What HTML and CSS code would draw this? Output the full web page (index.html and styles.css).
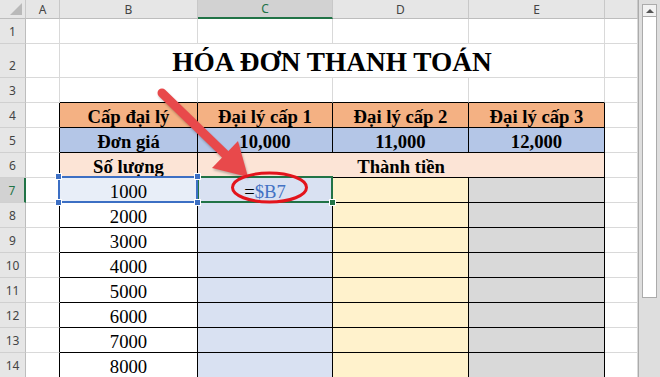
FILE: index.html
```html
<!DOCTYPE html>
<html lang="vi">
<head>
    <meta charset="UTF-8">
    <title>Hóa đơn thanh toán</title>
    <link rel="stylesheet" href="styles.css">
</head>
<body>

<div class="window">
    <div class="sheet">
        <table class="grid">
            <tr class="heads">
                <th class="corner"><span class="tri"></span></th>
                <th class="w-a">A</th>
                <th class="w-b">B</th>
                <th class="w-c active">C</th>
                <th class="w-d">D</th>
                <th class="w-e">E</th>
                <th class="w-f"></th>
            </tr>
            <tr>
                <th class="rh">1</th>
                <td></td><td></td><td></td><td></td><td></td><td></td>
            </tr>
            <tr class="tall">
                <th class="rh">2</th>
                <td></td>
                <td colspan="4" class="title">HÓA ĐƠN THANH TOÁN</td>
                <td></td>
            </tr>
            <tr class="pre">
                <th class="rh">3</th>
                <td></td><td class="edge"></td><td class="edge"></td><td class="edge"></td><td class="edge"></td><td></td>
            </tr>
            <tr class="trow head-row">
                <th class="rh">4</th>
                <td></td>
                <td class="bold">Cấp đại lý</td>
                <td class="bold">Đại lý cấp 1</td>
                <td class="bold">Đại lý cấp 2</td>
                <td class="bold">Đại lý cấp 3</td>
                <td></td>
            </tr>
            <tr class="trow price-row">
                <th class="rh">5</th>
                <td></td>
                <td class="bold">Đơn giá</td>
                <td class="bold">10,000</td>
                <td class="bold">11,000</td>
                <td class="bold">12,000</td>
                <td></td>
            </tr>
            <tr class="trow qty-row">
                <th class="rh">6</th>
                <td></td>
                <td class="bold">Số lượng</td>
                <td colspan="3" class="bold">Thành tiền</td>
                <td></td>
            </tr>
            <tr class="trow">
                <th class="rh active">7</th>
                <td></td>
                <td class="sel">1000
                    <div class="sel-box">
                        <i class="hd tl"></i><i class="hd tr"></i><i class="hd bl"></i><i class="hd br"></i>
                    </div>
                </td>
                <td class="c-col cur"><span class="eq">=</span><span class="ref">$B7</span>
                    <div class="cur-box"><i class="fill"></i></div>
                </td>
                <td class="d-col"></td>
                <td class="e-col"></td>
                <td></td>
            </tr>
            <tr class="trow">
                <th class="rh">8</th>
                <td></td><td>2000</td><td class="c-col"></td><td class="d-col"></td><td class="e-col"></td><td></td>
            </tr>
            <tr class="trow">
                <th class="rh">9</th>
                <td></td><td>3000</td><td class="c-col"></td><td class="d-col"></td><td class="e-col"></td><td></td>
            </tr>
            <tr class="trow">
                <th class="rh">10</th>
                <td></td><td>4000</td><td class="c-col"></td><td class="d-col"></td><td class="e-col"></td><td></td>
            </tr>
            <tr class="trow">
                <th class="rh">11</th>
                <td></td><td>5000</td><td class="c-col"></td><td class="d-col"></td><td class="e-col"></td><td></td>
            </tr>
            <tr class="trow">
                <th class="rh">12</th>
                <td></td><td>6000</td><td class="c-col"></td><td class="d-col"></td><td class="e-col"></td><td></td>
            </tr>
            <tr class="trow">
                <th class="rh">13</th>
                <td></td><td>7000</td><td class="c-col"></td><td class="d-col"></td><td class="e-col"></td><td></td>
            </tr>
            <tr class="trow">
                <th class="rh">14</th>
                <td></td><td>8000</td><td class="c-col"></td><td class="d-col"></td><td class="e-col"></td><td></td>
            </tr>
        </table>

        <!-- annotation drawn over the sheet -->
        <svg class="marks" width="638" height="377" viewBox="0 0 638 377">
            <g class="arrow">
                <line x1="162" y1="93" x2="229" y2="158" stroke="#e8494b" stroke-width="9" stroke-linecap="round"/>
                <polygon points="248,177 212,168 238,141" fill="#e8494b"/>
            </g>
            <ellipse cx="269.5" cy="187.5" rx="37" ry="14.5" fill="none" stroke="#e3141c" stroke-width="3"/>
        </svg>
    </div>

    <div class="vscroll">
        <div class="sb-btn"><span class="up"></span></div>
        <div class="sb-thumb"></div>
    </div>
</div>

</body>
</html>
```

FILE: styles.css
```css
body {
    margin: 0;
    font-family: "Liberation Serif", "Times New Roman", serif;
    background: #fff;
}
.window {
    display: flex;
    width: 660px;
    height: 377px;
    overflow: hidden;
}
.sheet {
    position: relative;
    width: 638px;
    height: 377px;
    overflow: hidden;
}
.grid {
    border-spacing: 0;
    table-layout: fixed;
    width: 638px;
}
.grid th, .grid td {
    box-sizing: border-box;
    padding: 0;
    border-right: 1px solid #d9d9d9;
    border-bottom: 1px solid #d9d9d9;
}
.grid tr {
    height: 25px;
}
.grid tr.heads {
    height: 19px;
}
.grid tr.tall {
    height: 34px;
}
.grid td {
    font-size: 18.67px;
    line-height: 21px;
    text-align: center;
    vertical-align: bottom;
    color: #000;
    white-space: nowrap;
}

/* column / row headers */
.heads th {
    background: #e6e6e6;
    font-family: "Noto Sans", sans-serif;
    font-size: 12px;
    font-weight: normal;
    color: #444;
    border-right-color: #c8c8c8;
    border-bottom-color: #bdbdbd;
}
.heads th.active {
    background: #d2d2d2;
    color: #217346;
    border-bottom: 2px solid #217346;
}
.corner { width: 26px; position: relative; }
.w-a { width: 34px; }
.w-b { width: 138px; }
.w-c { width: 135px; }
.w-d { width: 136px; }
.w-e { width: 136px; }
.w-f { width: 33px; }
.tri {
    position: absolute;
    right: 3px;
    bottom: 3px;
    width: 0;
    height: 0;
    border-left: 12px solid transparent;
    border-bottom: 12px solid #b9b9b9;
}
.rh {
    background: #e6e6e6;
    font-family: "Noto Sans", sans-serif;
    font-size: 12px;
    font-weight: normal;
    color: #444;
    text-align: center;
    vertical-align: bottom;
    line-height: 16px;
    padding-bottom: 3px !important;
    border-right-color: #bdbdbd !important;
    border-bottom-color: #d0d0d0 !important;
}
.rh.active {
    background: #d2d2d2;
    color: #217346;
    border-right: 2px solid #217346 !important;
}

/* title */
.title {
    font-weight: bold;
    font-size: 27.3px !important;
    line-height: 30px !important;
}

/* bordered table B3:E14 */
.pre td.edge {
    border-bottom-color: #000;
}
.trow td {
    border-right-color: #000;
    border-bottom-color: #000;
}
.trow td:first-of-type {
    border-bottom-color: #d9d9d9;
}
.trow td:last-child {
    border-right-color: #d9d9d9;
    border-bottom-color: #d9d9d9;
}
.bold {
    font-weight: bold;
}
.head-row td.bold { background: #f4b183; }
.price-row td.bold { background: #b4c6e7; }
.qty-row td.bold { background: #fce4d6; }
.c-col { background: #d9e1f2; }
.d-col { background: #fff2cc; }
.e-col { background: #d9d9d9; }

/* selection */
.sel {
    position: relative;
    background: #e8eef8;
}
.sel-box {
    position: absolute;
    left: -2px;
    top: -2px;
    right: -1px;
    bottom: -1px;
    border: 2px solid #3c6fc4;
    z-index: 2;
}
.hd {
    position: absolute;
    width: 5px;
    height: 5px;
    background: #3c6fc4;
    box-shadow: 0 0 0 1px #fff;
}
.hd.tl { left: -4px; top: -4px; }
.hd.tr { right: -4px; top: -4px; }
.hd.bl { left: -4px; bottom: -4px; }
.hd.br { right: -4px; bottom: -4px; }
.cur {
    position: relative;
}
.cur-box {
    position: absolute;
    left: -1px;
    top: -2px;
    right: -1px;
    bottom: -1px;
    border: 2px solid #217346;
    z-index: 1;
}
.fill {
    position: absolute;
    right: -4px;
    bottom: -4px;
    width: 5px;
    height: 5px;
    background: #217346;
    box-shadow: 0 0 0 1px #fff;
}
.eq { color: #000; }
.ref { color: #4472c4; }

/* annotation */
.marks {
    position: absolute;
    left: 0;
    top: 0;
    pointer-events: none;
    z-index: 3;
}
.arrow {
    filter: drop-shadow(1px 2px 1px rgba(0,0,0,0.25));
}

/* scrollbar */
.vscroll {
    box-sizing: border-box;
    width: 22px;
    height: 377px;
    background: #dedede;
    border-left: 1px solid #ababab;
    padding: 4px 3px 0 3px;
    display: flex;
    flex-direction: column;
}
.sb-btn {
    box-sizing: border-box;
    height: 13px;
    background: #f2f2f2;
    border: 1px solid #ababab;
    display: flex;
    align-items: center;
    justify-content: center;
}
.up {
    width: 0;
    height: 0;
    border-left: 4px solid transparent;
    border-right: 4px solid transparent;
    border-bottom: 4px solid #555;
}
.sb-thumb {
    box-sizing: border-box;
    height: 281px;
    background: #fff;
    border: 1px solid #ababab;
    border-top: none;
}
```
